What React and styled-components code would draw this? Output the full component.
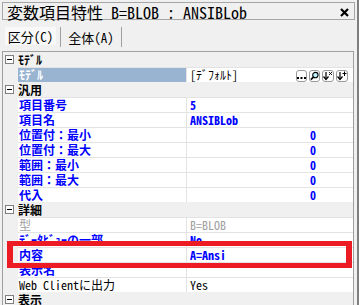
import React from "react";
import styled, { createGlobalStyle } from "styled-components";

const GlobalStyle = createGlobalStyle`
  html, body { margin: 0; padding: 0; background: #f0f0f0; }
  body {
    font-family: "Noto Sans Mono CJK JP", "Noto Sans CJK JP", monospace;
    font-size: 12px;
  }
  * { box-sizing: border-box; }
`;

const Window = styled.div`
  position: relative;
  width: 359px;
  height: 305px;
  overflow: hidden;
  background: #f0f0f0;
  border-right: 2px solid #7f7f7f;
  padding: 2px 3px 0 2px;
  display: flex;
  flex-direction: column;
`;

const TitleBar = styled.div`
  width: 353px;
  height: 18px;
  border: 1px solid #a6a6a6;
  background: #f0f0f0;
  display: flex;
  align-items: center;
  justify-content: space-between;
  padding: 0 4px 0 4px;
  font-size: 16px;
  line-height: 16px;
  color: #000;
`;

const TitleText = styled.span`
  white-space: pre;
  margin-top: 1px;
`;

const TabRow = styled.div`
  margin-top: 7px;
  height: 20px;
  display: flex;
  align-items: stretch;
  padding-left: 3px;
`;

const TabButton = styled.div`
  width: ${(p) => p.$w}px;
  height: ${(p) => (p.$pressed ? 18 : 20)}px;
  display: flex;
  align-items: center;
  justify-content: center;
  font-size: 13px;
  line-height: 13px;
  color: #000;
  border: 1px solid ${(p) => (p.$pressed ? "#8a8a8a #ffffff #ffffff #8a8a8a" : "transparent")};
  background: ${(p) => (p.$pressed ? "#f9f9f9" : "transparent")};
`;

const Separator = styled.div`
  width: 1px;
  height: 20px;
  margin: 0 ${(p) => p.$mr || 0}px 0 ${(p) => p.$ml || 0}px;
  background: #a0a0a0;
`;

const Grid = styled.div`
  margin-top: 4px;
  width: 352px;
  flex: 1;
  border: 1px solid #a0a0a0;
  border-bottom: none;
  background: #f0f0f0;
  display: flex;
  flex-direction: column;
`;

const CategoryRow = styled.div`
  height: 15px;
  flex: none;
  display: flex;
  align-items: center;
  background: #f0f0f0;
  padding-left: 2px;
`;

const Expander = styled.span`
  width: 9px;
  height: 9px;
  border: 1px solid #808080;
  background: #fff;
  position: relative;
  margin-right: 3px;
  &::after {
    content: "";
    position: absolute;
    left: 1px;
    right: 1px;
    top: 3px;
    height: 1px;
    background: #000;
  }
`;

const CategoryLabel = styled.span`
  font-weight: bold;
  color: #000;
  line-height: 14px;
  margin-left: 1px;
`;

const ItemRow = styled.div`
  height: 15px;
  flex: none;
  display: grid;
  grid-template-columns: 15px 169px 1fr;
`;

const Gutter = styled.div`
  background: #f0f0f0;
`;

const NameCell = styled.div`
  border-top: 1px solid #e3e3e3;
  border-right: 1px solid #e3e3e3;
  background: ${(p) => (p.$selected ? "#99b4d1" : "#fff")};
  color: ${(p) => (p.$selected ? "#fff" : p.$tone === "gray" ? "#a0a0a0" : p.$tone === "black" ? "#000" : "#0000ff")};
  font-weight: ${(p) => (p.$tone === "gray" || p.$tone === "black" ? "normal" : "bold")};
  padding-left: 1px;
  line-height: 14px;
  white-space: pre;
  overflow: hidden;
`;

const ValueCell = styled.div`
  border-top: 1px solid #e3e3e3;
  background: #fff;
  color: ${(p) => (p.$tone === "gray" ? "#a0a0a0" : p.$tone === "black" ? "#000" : "#0000ff")};
  font-weight: ${(p) => (p.$tone === "gray" || p.$tone === "black" ? "normal" : "bold")};
  padding: 0 ${(p) => (p.$right ? 37 : 0)}px 0 3px;
  text-align: ${(p) => (p.$right ? "right" : "left")};
  line-height: 14px;
  white-space: pre;
  display: flex;
  align-items: center;
  justify-content: ${(p) => (p.$right ? "flex-end" : "space-between")};
`;

const ButtonGroup = styled.div`
  display: flex;
  gap: 2px;
  margin-right: 5px;
  margin-top: 1px;
`;

const MiniButton = styled.div`
  width: ${(p) => p.$w || 11}px;
  height: 12px;
  border: 1px solid #9a9a9a;
  border-radius: 3px;
  background: #fff;
  display: flex;
  align-items: center;
  justify-content: center;
`;

const Highlight = styled.div`
  position: absolute;
  left: 7px;
  top: 241px;
  width: 345px;
  height: 27px;
  border-style: solid;
  border-color: #ed1c24;
  border-width: 5px 6px;
  pointer-events: none;
`;

const CloseIcon = () => (
  <svg width="9" height="9" viewBox="0 0 9 9" style={{ marginTop: 3, marginRight: 1 }}>
    <path d="M1 1 L8 8 M8 1 L1 8" stroke="#000" strokeWidth="2.2" />
  </svg>
);

const rows = [
  { type: "cat", label: "ﾓﾃﾞﾙ" },
  { name: "ﾓﾃﾞﾙ", value: "[ﾃﾞﾌｫﾙﾄ]", tone: "black", selected: true, buttons: true },
  { type: "cat", label: "汎用" },
  { name: "項目番号", value: "5" },
  { name: "項目名", value: "ANSIBLob" },
  { name: "位置付：最小", value: "0", right: true },
  { name: "位置付：最大", value: "0", right: true },
  { name: "範囲：最小", value: "0", right: true },
  { name: "範囲：最大", value: "0", right: true },
  { name: "代入", value: "0", right: true },
  { type: "cat", label: "詳細" },
  { name: "型", value: "B=BLOB", nameTone: "gray", tone: "gray" },
  { name: "ﾃﾞｰﾀﾋﾞｭｰの一部", value: "No" },
  { name: "内容", value: "A=Ansi" },
  { name: "表示名", value: "" },
  { name: "Web Clientに出力", value: "Yes", nameTone: "black", tone: "black" },
  { type: "cat", label: "表示" },
];

const Buttons = () => (
  <ButtonGroup>
    <MiniButton>
      <svg width="9" height="8" viewBox="0 0 9 8">
        <rect x="0" y="5" width="2" height="2" fill="#000" />
        <rect x="3.5" y="5" width="2" height="2" fill="#000" />
        <rect x="7" y="5" width="2" height="2" fill="#000" />
      </svg>
    </MiniButton>
    <MiniButton>
      <svg width="10" height="10" viewBox="0 0 10 10">
        <circle cx="6" cy="4" r="3" fill="#bff4ff" stroke="#000" strokeWidth="1.2" />
        <path d="M4 6 L1 9" stroke="#000" strokeWidth="1.8" />
      </svg>
    </MiniButton>
    <MiniButton $w={12}>
      <svg width="10" height="10" viewBox="0 0 10 10">
        <path d="M3 1 V8" stroke="#000" strokeWidth="1.2" />
        <path d="M0.5 5.5 L3 8.5 L5.5 5.5" stroke="#000" strokeWidth="1.2" fill="none" />
        <path d="M6 1 L9 4 M9 1 L6 4" stroke="#000" strokeWidth="0.9" />
      </svg>
    </MiniButton>
    <MiniButton $w={12}>
      <svg width="10" height="10" viewBox="0 0 10 10">
        <path d="M3 1 V8" stroke="#000" strokeWidth="1.2" />
        <path d="M0.5 5.5 L3 8.5 L5.5 5.5" stroke="#000" strokeWidth="1.2" fill="none" />
        <path d="M7.5 0.5 V5 M5.5 2.5 H9.5" stroke="#000" strokeWidth="1" />
      </svg>
    </MiniButton>
  </ButtonGroup>
);

export default function App() {
  return (
    <>
      <GlobalStyle />
      <Window>
        <TitleBar>
          <TitleText>変数項目特性 B=BLOB : ANSIBLob</TitleText>
          <CloseIcon />
        </TitleBar>
        <TabRow>
          <TabButton $pressed $w={51}>区分(C)</TabButton>
          <Separator $ml={4} />
          <TabButton $w={60}>全体(A)</TabButton>
          <Separator />
        </TabRow>
        <Grid>
          {rows.map((r, i) =>
            r.type === "cat" ? (
              <CategoryRow key={i}>
                <Expander />
                <CategoryLabel>{r.label}</CategoryLabel>
              </CategoryRow>
            ) : (
              <ItemRow key={i}>
                <Gutter />
                <NameCell $selected={r.selected} $tone={r.nameTone}>
                  {r.name}
                </NameCell>
                <ValueCell $tone={r.tone} $right={r.right}>
                  <span>{r.value}</span>
                  {r.buttons && <Buttons />}
                </ValueCell>
              </ItemRow>
            )
          )}
        </Grid>
        <Highlight />
      </Window>
    </>
  );
}
